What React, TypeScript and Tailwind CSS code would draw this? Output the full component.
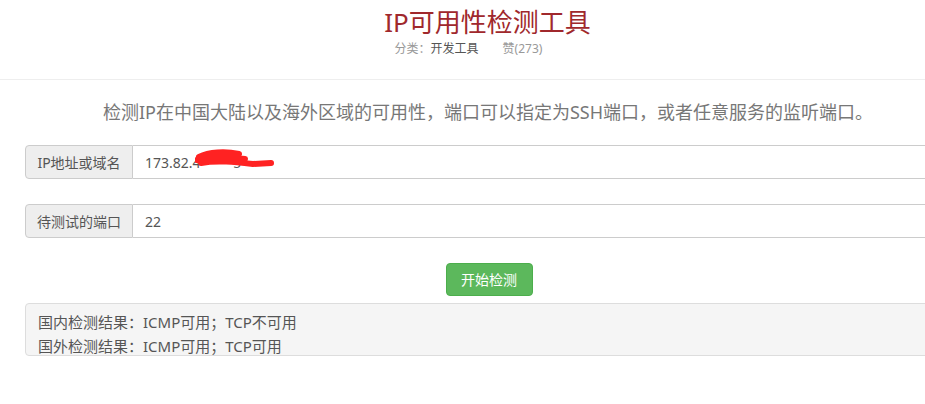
import React from 'react';

const font = { fontFamily: '"Noto Sans", "Noto Sans CJK SC", sans-serif' };

function InputRow({ label, children }: { label: string; children: React.ReactNode }) {
    return (
        <div className="flex h-[34px] w-full">
            <div className="w-[108px] shrink-0 flex items-center justify-center bg-[#eeeeee] border border-[#cccccc] rounded-l-[4px] text-[14px] text-[#555555]">
                {label}
            </div>
            <div className="flex-1 flex items-center pl-[12px] border border-l-0 border-[#cccccc] bg-white text-[14px] text-[#555555]">
                {children}
            </div>
        </div>
    );
}

export default function App() {
    return (
        <div className="w-[925px] h-[404px] overflow-hidden bg-white" style={font}>
            {/* Header */}
            <div className="h-[80px] border-b border-[#eeeeee] flex flex-col items-center">
                <h1 className="mt-[4px] pl-[50px] text-[26px] leading-[36px] text-[#a0282c]">IP可用性检测工具</h1>
                <div className="mt-[1px] pl-[12px] flex gap-[24px] text-[12px] leading-[16px] text-[#999999]">
                    <span>分类：<span className="text-[#555555]">开发工具</span></span>
                    <span>赞(273)</span>
                </div>
            </div>

            <div className="w-[926px] ml-[25px]">
                <p className="mt-[18px] text-center text-[18px] leading-[28px] text-[#777777]">
                    检测IP在中国大陆以及海外区域的可用性，端口可以指定为SSH端口，或者任意服务的监听端口。
                </p>

                <div className="mt-[19px] flex flex-col gap-[25px]">
                    <InputRow label="IP地址或域名">
                        <span className="relative">
                            173.82.4&nbsp;&nbsp;&nbsp;&nbsp;&nbsp;&nbsp;&nbsp;&nbsp;&nbsp;5
                            <svg className="absolute left-[50px] top-[-4px]" width="82" height="24" viewBox="0 0 82 24">
                                <path d="M4 9 C 14 4, 30 3, 44 6 M2 12 C 16 8, 34 9, 50 11 M6 15 C 22 12, 40 14, 58 16 L 76 15" stroke="#ff2222" strokeWidth="6" fill="none" strokeLinecap="round" />
                            </svg>
                        </span>
                    </InputRow>
                    <InputRow label="待测试的端口">22</InputRow>
                </div>

                <div className="mt-[25px] flex justify-center pl-[2px]">
                    <button className="w-[87px] h-[33px] rounded-[4px] bg-[#5cb85c] border border-[#4cae4c] text-white text-[14px]">
                        开始检测
                    </button>
                </div>

                <div className="mt-[7px] h-[53px] rounded-l-[4px] border border-[#dddddd] bg-[#f5f5f5] pl-[12px] pt-[6px] text-[15px] leading-[24px] text-[#555555]">
                    <div>国内检测结果：ICMP可用；TCP不可用</div>
                    <div>国外检测结果：ICMP可用；TCP可用</div>
                </div>
            </div>
        </div>
    );
}
